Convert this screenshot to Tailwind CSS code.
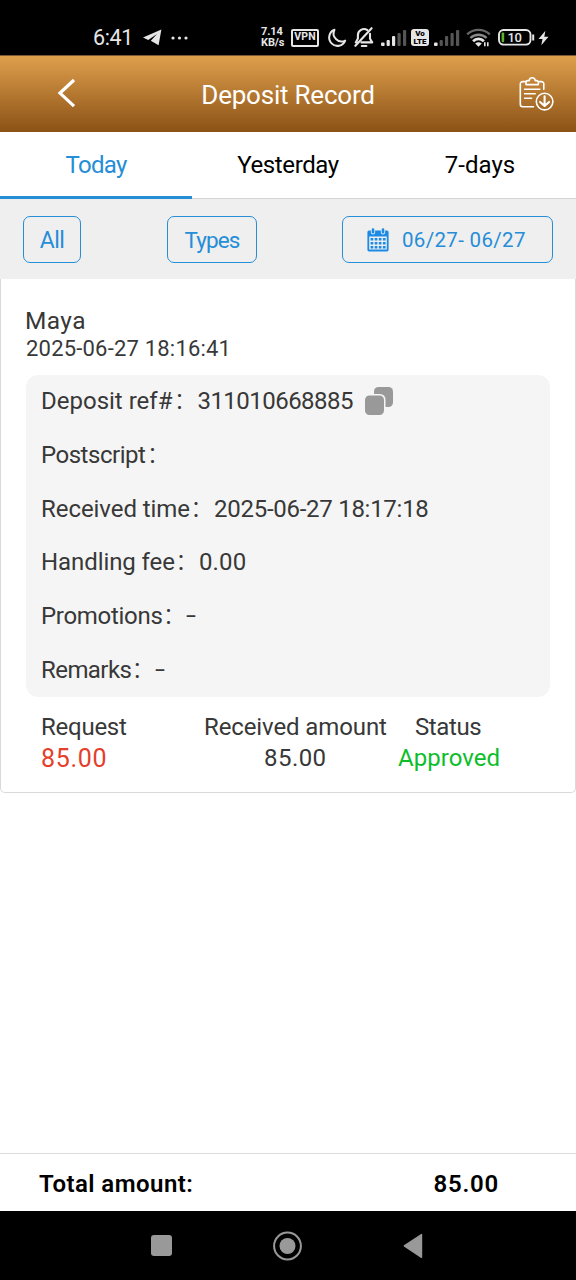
<!DOCTYPE html>
<html lang="en">
<head>
<meta charset="utf-8">
<title>Deposit Record</title>
<script src="https://cdn.jsdelivr.net/npm/@tailwindcss/browser@4"></script>
</head>
<body class="w-[576px] h-[1280px] overflow-hidden bg-white font-['Roboto','Noto_Sans_CJK_SC',sans-serif] text-[#383838] flex flex-col whitespace-nowrap">

<!-- Status bar -->
<div class="h-[55px] bg-black shrink-0 flex items-center pt-5 pl-[93px] text-[#e6e6e6]">
  <span class="w-[50px] text-[21.5px] leading-[34px] tracking-[-0.4px]">6:41</span>
  <svg class="w-[19px] h-[17px]" viewBox="0 0 19 17"><path d="M18.4.5 0 8.6l5.2 2.4L14 4.9 7.8 11.8 15.6 16.3Z" fill="#e6e6e6"/></svg>
  <svg class="ml-2 w-[19px] h-[4px]" viewBox="0 0 19 4"><g fill="#e6e6e6"><circle cx="3" cy="2" r="1.6"/><circle cx="9.5" cy="2" r="1.6"/><circle cx="16" cy="2" r="1.6"/></g></svg>
  <span class="ml-[72px] w-[30px] text-[11px] leading-[10.5px] font-bold tracking-[-0.1px]">7.14<br>KB/s</span>
  <span class="w-[28px] h-[18px] border-2 border-[#e6e6e6] rounded-[2px] flex items-center justify-center text-[10.5px] leading-none font-bold tracking-[0.2px]">VPN</span>
  <svg class="ml-2 w-[20px] h-[20px]" viewBox="0 0 20 20"><path d="M7.5 1.8A8.3 8.3 0 1 0 18.2 12.6 8 8 0 0 1 7.5 1.8Z" fill="none" stroke="#e6e6e6" stroke-width="2" stroke-linejoin="round"/></svg>
  <svg class="ml-[7px] w-[20px] h-[21px]" viewBox="0 0 20 21" fill="none" stroke="#e6e6e6" stroke-width="2.1" stroke-linecap="round" stroke-linejoin="round"><path d="M3.9 11.5V8.3A6.1 6.1 0 0 1 13.2 3M16 6.8V11.8l2.2 3.6H7.4M3.9 11.5 1.8 15.4H3"/><path d="M17.6 1.2 1.4 18.8"/><path d="M7.8 19h4.6"/></svg>
  <svg class="ml-[7px] w-[26px] h-[18px]" viewBox="0 0 26 18"><g fill="#e6e6e6"><rect y="13.6" width="3.6" height="3.4" rx="1"/><rect x="5.6" y="11" width="3.2" height="6" rx="1"/><rect x="11" y="7" width="3.2" height="10" rx="1"/></g><g fill="#555"><rect x="16.5" y="4" width="3.2" height="13" rx="1"/><rect x="22" y="1" width="3.2" height="16" rx="1"/></g></svg>
  <span class="ml-[4px] w-[18px] h-[17px] rounded-[3px] bg-[#e6e6e6] text-black text-[8px] leading-[7.5px] font-black flex items-center justify-center text-center"><span>Vo<br>LTE</span></span>
  <svg class="ml-[5px] w-[26px] h-[18px]" viewBox="0 0 26 18"><rect y="13.6" width="3.6" height="3.4" rx="1" fill="#e6e6e6"/><g fill="#555"><rect x="5.6" y="11" width="3.2" height="6" rx="1"/><rect x="11" y="7" width="3.2" height="10" rx="1"/><rect x="16.5" y="4" width="3.2" height="13" rx="1"/><rect x="22" y="1" width="3.2" height="16" rx="1"/></g></svg>
  <svg class="ml-[6px] w-[26px] h-[20px]" viewBox="0 0 26 20" fill="none" stroke-width="2.4"><path d="M1.2 6.4a16.4 16.4 0 0 1 22.6 0" stroke="#666"/><path d="M4.4 10a11.6 11.6 0 0 1 16.2 0" stroke="#888"/><path d="M7.1 13.2a7.6 7.6 0 0 1 10.8 0" stroke="#e6e6e6" stroke-width="2.8"/><path d="m9.2 15.6 3.3 3.2 3.3-3.2a5 5 0 0 0-6.6 0Z" fill="#e6e6e6"/><path d="M18.8 18.2v-4M21.8 14.2v4" stroke="#e6e6e6" stroke-width="1.6"/></svg>
  <svg class="ml-[6px] w-[37px] h-[17px]" viewBox="0 0 37 17"><rect x="1" y="1" width="31.5" height="14.6" rx="4.5" fill="none" stroke="#e6e6e6" stroke-width="1.9"/><rect x="3.6" y="3.6" width="2.6" height="9.6" rx="1" fill="#57b52c"/><path d="M35.2 5.5v6" stroke="#e6e6e6" stroke-width="2"/><text x="16.5" y="13" text-anchor="middle" font-family="Roboto" font-size="13" font-weight="500" letter-spacing="-0.5" fill="#e6e6e6">10</text></svg>
  <svg class="ml-[3px] w-[11px] h-[16px]" viewBox="0 0 11 16"><path d="M7.4.8.5 9h4L3.3 15.2 10.5 6.8H6.3Z" fill="#e6e6e6"/></svg>
</div>

<!-- Header -->
<div class="h-[77px] shrink-0 border-t border-[#79583a] bg-linear-to-b from-[#dfa04c] to-[#8b5215] text-white grid grid-cols-3 items-center">
  <svg class="ml-[57px] -mt-[3px] w-[19px] h-[30px]" viewBox="0 0 19 30"><path d="M17 2 3 15.1 17 28.2" fill="none" stroke="#fff" stroke-width="3.2"/></svg>
  <span class="text-center text-[26px] leading-[30px] tracking-[-0.22px] pt-0.5">Deposit Record</span>
  <svg class="justify-self-end mr-[22px] w-[36px] h-[36px]" viewBox="0 0 36 36" fill="none" stroke="#fff" stroke-width="1.6" stroke-linecap="round" stroke-linejoin="round"><path d="M7.8 5.6H4.7A2.4 2.4 0 0 0 2.3 8v20.3a2.4 2.4 0 0 0 2.4 2.4h10.8M21.4 5.6h2a2.4 2.4 0 0 1 2.4 2.4v5.2"/><path d="M8 8.6V6.4c0-1 .8-1.8 1.8-1.8h1.5a2.9 2.9 0 0 1 5.8 0h1.5c1 0 1.8.8 1.8 1.8v2.2Z"/><path d="M6.6 13.2h15.2M6.6 17.8h10.6M6.6 22.3h7"/><circle cx="26.6" cy="25.6" r="8.3"/><path d="M26.6 20.4v9.2M22.1 25.9l4.5 4.2 4.5-4.2" stroke-width="2.1"/></svg>
</div>

<!-- Tabs -->
<div class="h-[67px] shrink-0 grid grid-cols-3 text-center text-[24px] leading-[28px] text-black">
  <div class="border-b-3 border-[#268dd7] text-[#268dd7] pt-[19px] tracking-[-0.7px]">Today</div>
  <div class="border-b border-[#d4d4d4] pt-[19px] tracking-[-0.4px]">Yesterday</div>
  <div class="border-b border-[#d4d4d4] pt-[19px]">7-days</div>
</div>

<!-- Filters -->
<div class="h-[80px] shrink-0 bg-[#efefef] flex pt-[17px] pl-[23px] text-[#268dd7] text-[23px]">
  <div class="w-[58px] h-[47px] border border-[#268dd7] rounded-[7px] flex items-center justify-center pt-[3px] tracking-[-0.5px]">All</div>
  <div class="ml-[86px] w-[90px] h-[47px] border border-[#268dd7] rounded-[7px] flex items-center justify-center pt-[3px] text-[22.5px] tracking-[-0.9px]">Types</div>
  <div class="ml-[85px] w-[211px] h-[47px] border border-[#268dd7] rounded-[7px] flex items-center pl-[24px] text-[20.5px] tracking-[0.33px]">
    <svg class="w-[22px] h-[24px] mr-[13px]" viewBox="0 0 22 24"><path fill="#1c8be6" fill-rule="evenodd" d="M2 2.6h18a1.6 1.6 0 0 1 1.6 1.6v17.6a1.6 1.6 0 0 1-1.6 1.6H2A1.6 1.6 0 0 1 .4 21.8V4.2A1.6 1.6 0 0 1 2 2.6Zm.2 6v13h17.6v-13Z"/><path d="M6 1.6v2.8M16 1.6v2.8" stroke="#efefef" stroke-width="4.2" stroke-linecap="round"/><path d="M6 1.6v2.6M16 1.6v2.6" stroke="#1c8be6" stroke-width="2.6" stroke-linecap="round"/><path d="M3.6 11.2h15M3.6 15.2h15M3.6 19.2h15" stroke="#1c8be6" stroke-width="2.5" stroke-dasharray="2.7 1.4"/></svg>
    <span class="pt-px">06/27- 06/27</span>
  </div>
</div>

<!-- Record card -->
<div class="h-[514px] shrink-0 border border-t-0 border-[#d9d9d9] rounded-b-[5px] px-[25px] pt-[28px]">
  <div class="text-[24.5px] leading-[28px] tracking-[0.4px] -ml-px">Maya</div>
  <div class="text-[22px] leading-[27px] tracking-[0.2px] -ml-px pl-px">2025-06-27 18:16:41</div>
  <div class="mt-[13px] h-[322px] rounded-[12px] bg-[#f5f5f5] pl-[15px] grid grid-rows-6 items-center text-[24px] leading-[28px]">
    <div class="flex items-center -mt-px"><span>Deposit ref#</span><span class="font-light pl-px">：</span><span class="tracking-[-0.53px]">311010668885</span>
      <svg class="ml-[11px] w-[30px] h-[30px]" viewBox="0 0 30 30"><rect x="10" y="1" width="19" height="20" rx="4.5" fill="#999"/><rect x="0" y="8" width="21.5" height="22" rx="5.5" fill="#f5f5f5"/><rect x="1" y="9.5" width="19" height="19.5" rx="4.5" fill="#999"/></svg></div>
    <div class="flex"><span class="tracking-[-0.48px]">Postscript</span><span class="font-light pl-px">：</span></div>
    <div class="flex -mt-px"><span class="tracking-[-0.06px]">Received time</span><span class="font-light">：</span><span class="tracking-[-0.27px]">2025-06-27 18:17:18</span></div>
    <div class="flex -mt-px"><span class="tracking-[-0.08px]">Handling fee</span><span class="font-light">：</span><span class="tracking-[0.2px]">0.00</span></div>
    <div class="flex"><span class="tracking-[-0.29px]">Promotions</span><span class="font-light">：</span><span class="scale-x-150 origin-left -ml-px -translate-y-px">-</span></div>
    <div class="flex"><span class="tracking-[-0.57px]">Remarks</span><span class="font-light">：</span><span class="scale-x-150 origin-left -translate-y-px">-</span></div>
  </div>
  <div class="flex pt-[15px] pl-[15px] text-[24px] leading-[31px]">
    <div class="w-[150px]"><div class="tracking-[-0.25px]">Request</div><div class="text-[25px] tracking-[0.7px] text-[#e53e2b]">85.00</div></div>
    <div class="w-[208px] pl-[13px]"><div class="tracking-[-0.11px]">Received amount</div><div class="pl-[60px] tracking-[0.45px]">85.00</div></div>
    <div class="-ml-px"><div class="pl-[17px] tracking-[-0.4px]">Status</div><div class="tracking-[0.05px] text-[#0dbe2b]">Approved</div></div>
  </div>
</div>

<div class="grow"></div>

<!-- Total -->
<div class="h-[58px] shrink-0 border-t border-[#dcdcdc] flex items-center justify-between pl-[39px] pr-[77px] pt-[2px] text-[24px] leading-[28px] font-semibold text-black">
  <span class="tracking-[0.45px]">Total amount:</span>
  <span class="tracking-[0.75px]">85.00</span>
</div>

<!-- System navigation -->
<div class="h-[69px] shrink-0 bg-black flex items-center pl-[151px]">
  <div class="w-[21px] h-[21px] rounded-[3px] bg-[#999]"></div>
  <svg class="ml-[101px] w-[30px] h-[30px]" viewBox="0 0 30 30"><circle cx="14.5" cy="15" r="13.4" fill="none" stroke="#999" stroke-width="2"/><circle cx="14.5" cy="15" r="8" fill="#999"/></svg>
  <svg class="ml-[100px] w-[20px] h-[26px]" viewBox="0 0 20 26"><path d="M18.5 1.5v22.8L1.3 12.9Z" fill="#999" stroke="#999" stroke-width="1.4" stroke-linejoin="round"/></svg>
</div>
</body>
</html>
